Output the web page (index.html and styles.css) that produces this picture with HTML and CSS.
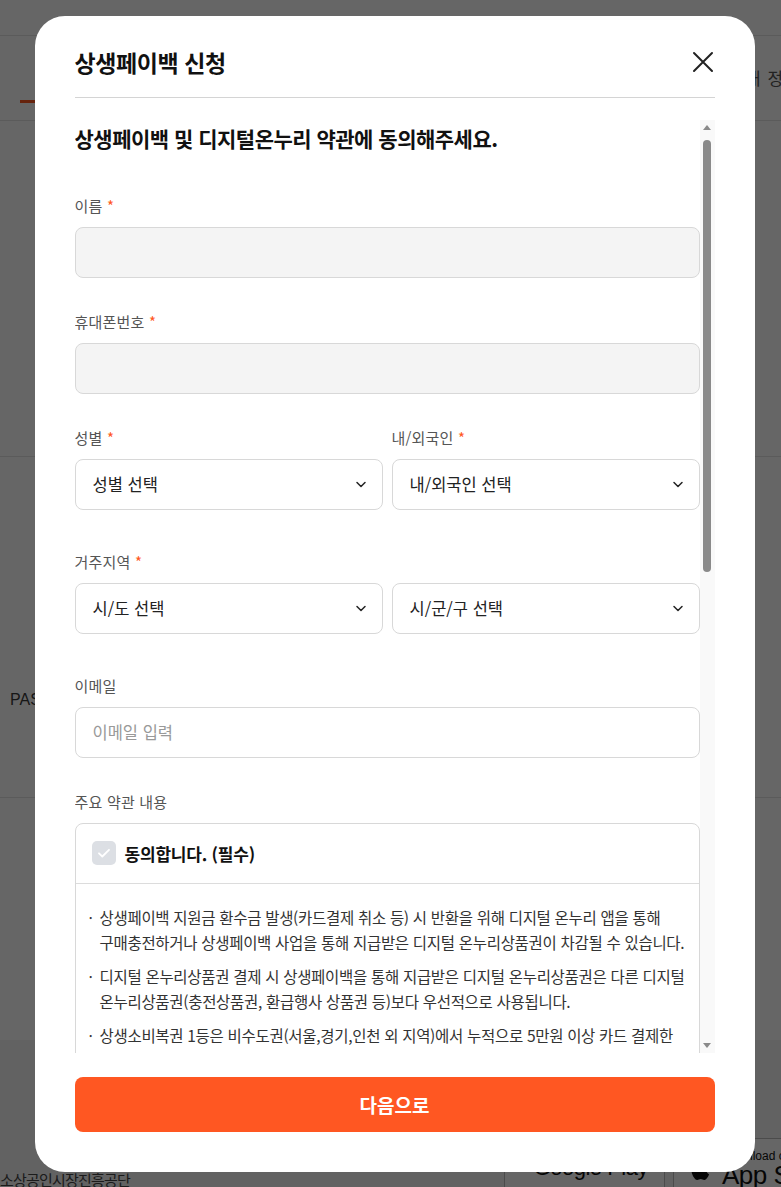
FILE: index.html
```html
<!DOCTYPE html>
<html lang="ko">
<head>
    <meta charset="UTF-8">
    <meta name="viewport" content="width=device-width, initial-scale=1.0">
    <title>상생페이백 신청</title>
    <link rel="stylesheet" href="styles.css">
</head>
<body>
    <div class="page">
        <div class="topbar"></div>
        <nav class="tabs">
            <span class="tab tab-active">상생페이백 신청</span>
            <span class="tab tab-right">내 정보</span>
        </nav>
        <section class="hero"></section>
        <section class="cert">
            <p class="cert-name">PASS 인증</p>
        </section>
        <section class="info"></section>
        <footer class="footer">
            <p class="footer-name">소상공인시장진흥공단</p>
            <div class="apps">
                <span class="app-btn">
                    <svg class="gp-logo" width="22" height="24" viewBox="0 0 22 24">
                        <path d="M1 1.5L12.5 12 1 22.5z" fill="#2196f3"/>
                        <path d="M1 1.5l15 8.3-3.5 2.2z" fill="#4caf50"/>
                        <path d="M1 22.5l15-8.3-3.5-2.2z" fill="#f44336"/>
                        <path d="M16 9.8l4.5 2.2-4.5 2.2-3.5-2.2z" fill="#ffc107"/>
                    </svg>
                    <span class="gp-text">Google Play</span>
                </span>
                <span class="app-btn">
                    <svg class="apple-logo" width="20" height="24" viewBox="0 0 20 24">
                        <path d="M16.4 12.7c0-2.7 2.2-4 2.3-4.1-1.3-1.9-3.3-2.1-4-2.2-1.7-.2-3.3 1-4.2 1-.9 0-2.2-1-3.6-.9-1.9 0-3.6 1.1-4.5 2.7-1.9 3.4-.5 8.3 1.4 11 .9 1.3 2 2.8 3.4 2.8 1.4-.1 1.9-.9 3.5-.9s2.1.9 3.6.9c1.5 0 2.4-1.4 3.3-2.7 1-1.5 1.5-3 1.5-3.1-.1 0-2.7-1-2.7-4.5zM13.7 4.6c.8-.9 1.3-2.2 1.1-3.5-1.1.1-2.4.7-3.2 1.6-.7.8-1.3 2.1-1.2 3.4 1.3.1 2.5-.6 3.3-1.5z" fill="#111"/>
                    </svg>
                    <span class="as-text">
                        <span class="as-small">Download on the</span>
                        <span class="as-big">App Store</span>
                    </span>
                </span>
            </div>
        </footer>
    </div>

    <div class="overlay">
        <div class="modal">
            <div class="modal-header">
                <h2 class="modal-title">상생페이백 신청</h2>
                <button class="close-btn" type="button">
                    <svg width="22" height="22" viewBox="0 0 22 22">
                        <path d="M2 2L20 20M20 2L2 20" stroke="#222" stroke-width="2" stroke-linecap="round"/>
                    </svg>
                </button>
            </div>

            <div class="modal-body">
                <div class="body-content">
                    <h3 class="form-heading">상생페이백 및 디지털온누리 약관에 동의해주세요.</h3>

                    <div class="field">
                        <label class="field-label">이름 <span class="req">*</span></label>
                        <input class="input input-readonly" type="text" readonly>
                    </div>

                    <div class="field">
                        <label class="field-label">휴대폰번호 <span class="req">*</span></label>
                        <input class="input input-readonly" type="text" readonly>
                    </div>

                    <div class="field-row">
                        <div class="field-col">
                            <label class="field-label">성별 <span class="req">*</span></label>
                            <button class="select" type="button">
                                <span>성별 선택</span>
                                <svg width="12" height="12" viewBox="0 0 12 12"><path d="M2 4.5l4 4 4-4" fill="none" stroke="#222" stroke-width="1.5" stroke-linecap="round" stroke-linejoin="round"/></svg>
                            </button>
                        </div>
                        <div class="field-col">
                            <label class="field-label">내/외국인 <span class="req">*</span></label>
                            <button class="select" type="button">
                                <span>내/외국인 선택</span>
                                <svg width="12" height="12" viewBox="0 0 12 12"><path d="M2 4.5l4 4 4-4" fill="none" stroke="#222" stroke-width="1.5" stroke-linecap="round" stroke-linejoin="round"/></svg>
                            </button>
                        </div>
                    </div>

                    <div class="field-row">
                        <div class="field-col">
                            <label class="field-label">거주지역 <span class="req">*</span></label>
                            <div class="select-pair">
                                <button class="select" type="button">
                                    <span>시/도 선택</span>
                                    <svg width="12" height="12" viewBox="0 0 12 12"><path d="M2 4.5l4 4 4-4" fill="none" stroke="#222" stroke-width="1.5" stroke-linecap="round" stroke-linejoin="round"/></svg>
                                </button>
                                <button class="select" type="button">
                                    <span>시/군/구 선택</span>
                                    <svg width="12" height="12" viewBox="0 0 12 12"><path d="M2 4.5l4 4 4-4" fill="none" stroke="#222" stroke-width="1.5" stroke-linecap="round" stroke-linejoin="round"/></svg>
                                </button>
                            </div>
                        </div>
                    </div>

                    <div class="field">
                        <label class="field-label">이메일</label>
                        <input class="input" type="text" placeholder="이메일 입력">
                    </div>

                    <div class="field">
                        <label class="field-label">주요 약관 내용</label>
                        <div class="terms-box">
                            <div class="terms-agree">
                                <span class="checkbox">
                                    <svg width="24" height="24" viewBox="0 0 24 24"><path d="M7 12.3l3.3 3.2L17 8.8" fill="none" stroke="#fff" stroke-width="1.8" stroke-linecap="round" stroke-linejoin="round"/></svg>
                                </span>
                                <span class="agree-text">동의합니다. (필수)</span>
                            </div>
                            <ul class="terms-list">
                                <li>상생페이백 지원금 환수금 발생(카드결제 취소 등) 시 반환을 위해 디지털 온누리 앱을 통해 구매충전하거나 상생페이백 사업을 통해 지급받은 디지털 온누리상품권이 차감될 수 있습니다.</li>
                                <li>디지털 온누리상품권 결제 시 상생페이백을 통해 지급받은 디지털 온누리상품권은 다른 디지털 온누리상품권(충전상품권, 환급행사 상품권 등)보다 우선적으로 사용됩니다.</li>
                                <li>상생소비복권 1등은 비수도권(서울,경기,인천 외 지역)에서 누적으로 5만원 이상 카드 결제한 고객 중 추첨을 통해 선정되며 당첨 시 개별 안내됩니다.</li>
                                <li>지급받은 디지털 온누리상품권은 지급일로부터 5년 이내에 사용하여야 하며, 기간 경과 시 소멸됩니다.</li>
                            </ul>
                        </div>
                    </div>
                </div>

                <div class="scrollbar">
                    <span class="sb-arrow">
                        <svg width="8" height="5" viewBox="0 0 8 5"><path d="M0 5L4 0 8 5z" fill="#8a8a8a"/></svg>
                    </span>
                    <span class="sb-thumb"></span>
                    <span class="sb-arrow sb-down">
                        <svg width="8" height="5" viewBox="0 0 8 5"><path d="M0 0L4 5 8 0z" fill="#8a8a8a"/></svg>
                    </span>
                </div>
            </div>

            <button class="next-btn" type="button">다음으로</button>
        </div>
    </div>
</body>
</html>
```

FILE: styles.css
```css
body {
    margin: 0;
    font-family: "Noto Sans CJK KR", "Noto Sans", sans-serif;
    background-color: white;
    color: #222;
    word-break: keep-all;
    overflow: hidden;
}

/* background page */
.page {
    width: 781px;
    height: 1187px;
    overflow: hidden;
}
.topbar {
    height: 35px;
    border-bottom: 1px solid #e4e4e4;
}
.tabs {
    display: flex;
    height: 84px;
    padding-left: 20px;
    border-bottom: 1px solid #e4e4e4;
    font-size: 17px;
    white-space: nowrap;
}
.tab {
    flex-shrink: 0;
}
.tab-active {
    width: 110px;
    height: 64px;
    padding-left: 30px;
    border-bottom: 3px solid #ff5722;
    line-height: 84px;
    color: #222;
}
.tab-right {
    margin-left: 585px;
    line-height: 84px;
    color: #555;
    letter-spacing: 1px;
}
.hero {
    height: 335px;
    border-bottom: 1px solid #e4e4e4;
}
.cert {
    height: 340px;
    border-bottom: 1px solid #e4e4e4;
}
.cert-name {
    margin: 0;
    padding: 233px 0 0 10px;
    font-family: "Liberation Sans", sans-serif;
    font-size: 16px;
    line-height: 20px;
    color: #3a3a3a;
    white-space: nowrap;
}
.info {
    height: 242px;
}
.footer {
    display: flex;
    height: 147px;
    padding-top: 98px;
    box-sizing: border-box;
    background-color: #f4f4f4;
    white-space: nowrap;
}
.footer-name {
    width: 504px;
    flex-shrink: 0;
    margin: 31px 0 0 0;
    font-size: 15px;
    line-height: 22px;
    color: #444;
    letter-spacing: -0.8px;
}
.apps {
    display: flex;
    gap: 8px;
    flex-shrink: 0;
}
.app-btn {
    display: flex;
    align-items: center;
    gap: 12px;
    height: 60px;
    padding: 0 16px;
    border: 1px solid #bbb;
    border-radius: 6px;
    background: white;
    flex-shrink: 0;
    font-family: "Liberation Sans", sans-serif;
    color: #111;
}
.app-btn:first-child {
    width: 161px;
    box-sizing: border-box;
}
.gp-text {
    font-size: 22px;
    letter-spacing: -0.5px;
}
.as-text {
    display: flex;
    flex-direction: column;
    line-height: 1;
}
.as-small {
    font-size: 12px;
}
.as-big {
    font-size: 26px;
    letter-spacing: -0.5px;
}

/* modal */
.overlay {
    position: fixed;
    inset: 0;
    display: flex;
    align-items: center;
    justify-content: center;
    padding-left: 8px;
    background-color: rgba(0, 0, 0, 0.6);
}
.modal {
    display: flex;
    flex-direction: column;
    width: 720px;
    height: 1156px;
    box-sizing: border-box;
    padding: 30px 40px 40px 40px;
    background-color: white;
    border-radius: 30px;
}
.modal-header {
    display: flex;
    justify-content: space-between;
    align-items: center;
    padding-bottom: 19px;
    border-bottom: 1px solid #d4d4d4;
}
.modal-title {
    margin: 0;
    font-size: 23px;
    line-height: 32px;
    font-weight: 700;
    color: #111;
    letter-spacing: -0.4px;
}
.close-btn {
    display: flex;
    padding: 0;
    margin-right: 1px;
    border: none;
    background: none;
    cursor: pointer;
}

.modal-body {
    display: flex;
    flex: 1;
    min-height: 0;
    margin-top: 22px;
}
.body-content {
    flex: 1;
    min-width: 0;
    padding-top: 4px;
    overflow: hidden;
}

/* scrollbar drawn beside the content */
.scrollbar {
    display: flex;
    flex-direction: column;
    align-items: center;
    width: 15px;
    flex-shrink: 0;
    background-color: #f9f9f9;
}
.sb-arrow {
    display: flex;
    justify-content: center;
    align-items: center;
    height: 15px;
}
.sb-down {
    margin-top: auto;
}
.sb-thumb {
    width: 8px;
    height: 432px;
    margin-top: 5px;
    border-radius: 4px;
    background-color: #8a8a8a;
}

.form-heading {
    margin: 0 0 44px 0;
    font-size: 21px;
    line-height: 28px;
    font-weight: 700;
    color: #111;
    letter-spacing: -0.5px;
}
.field {
    margin-bottom: 34px;
}
.field-row {
    display: flex;
    gap: 9px;
    margin-bottom: 42px;
}
.field-col {
    flex: 1;
    min-width: 0;
}
.select-pair {
    display: flex;
    gap: 9px;
}
.field-label {
    display: block;
    margin-bottom: 11px;
    font-size: 15px;
    line-height: 20px;
    color: #555;
    letter-spacing: 0.2px;
}
.req {
    color: #ff5722;
}
.input {
    display: block;
    width: 100%;
    height: 51px;
    box-sizing: border-box;
    padding: 0 17px;
    border: 1px solid #d8d8d8;
    border-radius: 8px;
    font-family: inherit;
    font-size: 16.5px;
    color: #222;
    outline: none;
}
.input::placeholder {
    color: #999;
}
.input-readonly {
    background-color: #f4f4f4;
}
.select {
    display: flex;
    flex: 1;
    justify-content: space-between;
    align-items: center;
    width: 100%;
    height: 51px;
    box-sizing: border-box;
    padding: 0 15px 0 17px;
    border: 1px solid #d8d8d8;
    border-radius: 8px;
    background-color: white;
    font-family: inherit;
    font-size: 16.5px;
    color: #222;
    cursor: pointer;
}

.terms-box {
    border: 1px solid #d8d8d8;
    border-radius: 8px;
}
.terms-agree {
    display: flex;
    align-items: center;
    gap: 9px;
    height: 59px;
    padding-left: 16px;
    border-bottom: 1px solid #dcdcdc;
}
.checkbox {
    display: flex;
    width: 24px;
    height: 24px;
    background-color: #dcdfe4;
    border-radius: 5px;
}
.agree-text {
    font-size: 17px;
    font-weight: 700;
    color: #111;
    letter-spacing: -0.2px;
}
.terms-list {
    list-style: none;
    margin: 0;
    padding: 21px 8px 20px 24px;
}
.terms-list li {
    margin-bottom: 9px;
    font-size: 15.5px;
    line-height: 25px;
    color: #333;
    letter-spacing: -0.3px;
    text-indent: -11px;
}
.terms-list li::before {
    content: "·";
    display: inline-block;
    width: 11px;
    text-indent: 0;
}

.next-btn {
    height: 55px;
    margin-top: 24px;
    flex-shrink: 0;
    border: none;
    border-radius: 8px;
    background-color: #ff5722;
    font-family: inherit;
    font-size: 19px;
    font-weight: 700;
    color: white;
    cursor: pointer;
}
```
